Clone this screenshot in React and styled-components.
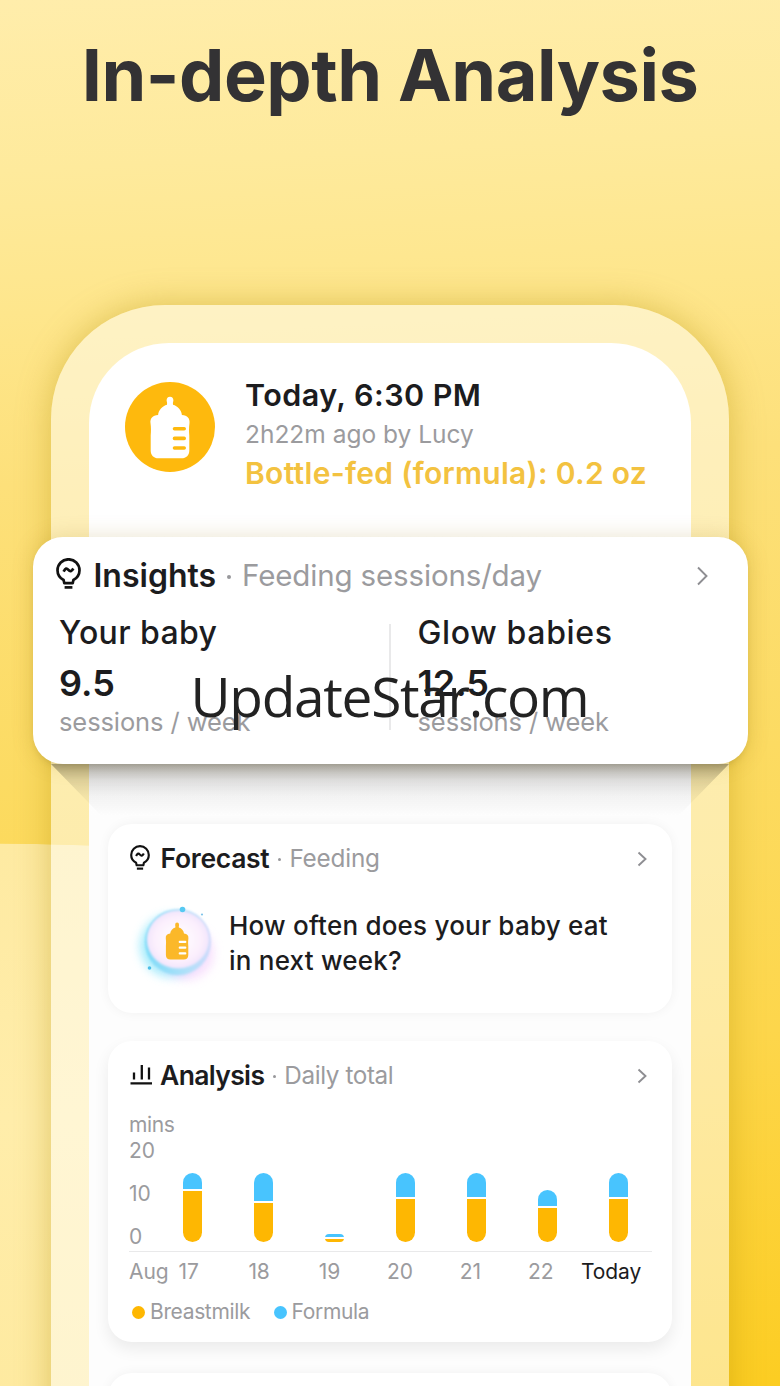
import React from "react";
import styled, { createGlobalStyle } from "styled-components";

const GlobalStyle = createGlobalStyle`
  *, *::before, *::after { box-sizing: border-box; }
  html, body { margin: 0; padding: 0; }
  body { font-family: Inter, "Liberation Sans", sans-serif; color: #1c1c1e; }
`;

const Page = styled.main`
  position: relative;
  width: 780px;
  height: 1386px;
  overflow: hidden;
  background: linear-gradient(177deg, #ffedab 0%, #feea9c 12%, #fee68c 22%, #fde07a 34%, #fcdb62 55%, #fdd64b 75%, #fccd22 100%);
`;

const Backdrop = styled.div`
  position: absolute;
  left: -480px;
  top: 843px;
  width: 800px;
  height: 1100px;
  border-radius: 400px / 26px;
  background: linear-gradient(180deg, #feeaa2 0%, #ffedaa 25%, #feeaa0 50%);
  mask-image: linear-gradient(90deg, #000 72%, transparent 84%);
`;

const Title = styled.h1`
  position: relative;
  margin: 0;
  padding-top: 30px;
  height: 305px;
  font-size: 72px;
  font-weight: 700;
  line-height: 90px;
  letter-spacing: -0.5px;
  text-align: center;
  color: #333234;
`;

const Phone = styled.section`
  position: relative;
  width: 678px;
  height: 1200px;
  margin-left: 51px;
  padding: 38px 38px 0;
  border-radius: 114px 114px 0 0;
  background: rgba(255, 255, 255, 0.49);
  box-shadow: 0 0 34px rgba(176, 140, 0, 0.4);
`;

const Screen = styled.div`
  height: 100%;
  border-radius: 80px 80px 0 0;
  background: linear-gradient(180deg, #fff 0, #fff 190px, #fdfdfd 480px);
`;

const Summary = styled.header`
  display: flex;
  align-items: flex-start;
  height: 194px;
  padding: 32px 0 0 36px;
  gap: 30px;
`;

const Badge = styled.svg`
  flex: none;
  width: 90px;
  height: 90px;
  margin-top: 7px;
`;

const SummaryText = styled.div`
  line-height: 39.5px;
  white-space: nowrap;
`;

const FeedTime = styled.div`
  font-size: 30.5px;
  font-weight: 600;
  letter-spacing: 0.45px;
`;

const FeedMeta = styled.div`
  font-size: 24.5px;
  font-weight: 400;
  color: #9b9b9e;
`;

const FeedAmount = styled.div`
  font-size: 30px;
  font-weight: 600;
  letter-spacing: 0.3px;
  color: #f3c240;
`;

const InsightCard = styled.article`
  position: relative;
  z-index: 1;
  height: 227px;
  margin: 0 -57px 0 -56px;
  padding: 18px 39px 0 26px;
  border-radius: 30px;
  background: #fff;
  box-shadow: 0 0 22px rgba(150, 115, 0, 0.2), 0 4px 8px -4px rgba(0, 0, 0, 0.16);
`;

const CastShadow = styled.div`
  position: absolute;
  z-index: 0;
  left: 0;
  top: 459px;
  width: 678px;
  height: 60px;
  background: linear-gradient(180deg, rgba(0, 0, 0, 0.3) 0, rgba(0, 0, 0, 0.12) 16px, rgba(0, 0, 0, 0.045) 32px, transparent 52px);
  clip-path: polygon(0 0, 678px 0, 640px 39px, 620px 60px, 58px 60px, 38px 39px);
`;

const CardHeader = styled.div`
  display: flex;
  align-items: center;
  height: 40px;
  white-space: nowrap;
`;

const Heading = styled.h2`
  margin: 0 0 0 ${(p) => p.$offset}px;
  font-size: ${(p) => (p.$large ? 32 : 26.5)}px;
  font-weight: 600;
  letter-spacing: ${(p) => p.$tracking || 0}px;
`;

const Subheading = styled.span`
  font-size: ${(p) => (p.$large ? 29.5 : 24.3)}px;
  font-weight: 400;
  letter-spacing: ${(p) => p.$tracking || 0}px;
  color: #9b9b9e;
`;

const Dot = styled.i`
  width: ${(p) => (p.$large ? 4 : 3)}px;
  height: ${(p) => (p.$large ? 4 : 3)}px;
  margin: ${(p) => (p.$large ? "3px 11px 0 11px" : "2px 8px 0 9px")};
  border-radius: 50%;
  background: #98989b;
`;

const Chevron = styled.svg`
  width: ${(p) => (p.$large ? 14 : 12)}px;
  height: ${(p) => (p.$large ? 20 : 16)}px;
  margin-left: auto;
  margin-top: 2px;
  fill: none;
  stroke: #8e8e92;
  stroke-width: 1.9;
`;

const BulbSvg = styled.svg`
  flex: none;
  width: ${(p) => (p.$large ? 25 : 20)}px;
  height: ${(p) => (p.$large ? 31 : 25)}px;
  margin-left: ${(p) => (p.$large ? -3 : 0)}px;
  margin-top: ${(p) => (p.$large ? -3 : -1)}px;
  fill: none;
  stroke: #111;
  stroke-width: 2.7;
  stroke-linejoin: round;
`;

const Compare = styled.div`
  display: grid;
  grid-template-columns: 330px 1.5px 1fr;
  margin-top: 14px;
`;

const Divider = styled.div`
  height: 106px;
  margin-top: 15px;
  background: #e9e9ea;
`;

const Stat = styled.div`
  padding-left: ${(p) => (p.$second ? 27 : 0)}px;
`;

const StatName = styled.div`
  padding-top: 1px;
  font-size: 32px;
  font-weight: 500;
  line-height: 45px;
  letter-spacing: ${(p) => p.$tracking}px;
`;

const StatValue = styled.div`
  font-size: 36px;
  font-weight: 600;
  line-height: 57px;
`;

const StatUnit = styled.div`
  font-size: 25.5px;
  font-weight: 400;
  line-height: 20px;
  letter-spacing: -0.1px;
  color: #9b9b9e;
`;

const Watermark = styled.div`
  position: absolute;
  z-index: 2;
  left: 190.5px;
  top: 656px;
  font-family: "Open Sans", "Noto Sans", sans-serif;
  font-size: 55px;
  line-height: 80px;
  letter-spacing: -1.3px;
  color: #222;
`;

const Card = styled.article`
  height: ${(p) => p.$height}px;
  margin: ${(p) => p.$gap}px 19px 0;
  padding: 14px 24px 0 22px;
  border-radius: 24px;
  background: #fff;
  box-shadow: ${(p) =>
    p.$raised ? "0 7px 16px rgba(0, 0, 0, 0.075)" : "0 0 12px rgba(0, 0, 0, 0.05)"};
`;

const ForecastRow = styled.div`
  display: flex;
  align-items: flex-start;
  gap: 12px;
  margin: 25px 0 0 7px;
`;

const Orb = styled.svg`
  flex: none;
  width: 80px;
  height: 80px;
  overflow: visible;
`;

const Question = styled.p`
  margin: 6px 0 0;
  font-size: 26px;
  font-weight: 500;
  line-height: 34.5px;
  letter-spacing: 0.22px;
  white-space: nowrap;
`;

const BarsIcon = styled.svg`
  flex: none;
  width: 22px;
  height: 22px;
  margin-top: -3px;
  stroke: #111;
  stroke-width: 2.3;
`;

const Chart = styled.div`
  margin: 17px -4px 0 -1px;
  font-size: 21px;
  font-weight: 400;
  color: #9b9b9e;
`;

const Unit = styled.div`
  line-height: 26px;
  letter-spacing: -0.4px;
`;

const Plot = styled.div`
  display: flex;
  height: 114px;
  border-bottom: 1.5px solid #e9e9ea;
`;

const Scale = styled.div`
  display: flex;
  flex-direction: column;
  justify-content: space-between;
  width: 53.5px;
  height: 111px;
  line-height: 25px;
`;

const Bars = styled.div`
  display: flex;
  align-items: flex-end;
  gap: 52px;
  height: 104px;
`;

const Bar = styled.div`
  display: flex;
  flex-direction: column;
  gap: 2px;
  width: 19px;
  border-radius: ${(p) => (p.$short ? "4px" : "9.5px")};
  overflow: hidden;
`;

const Segment = styled.div`
  height: ${(p) => p.$size}px;
  background: ${(p) => (p.$kind === "formula" ? "#48c4fe" : "#feb702")};
`;

const Dates = styled.div`
  display: flex;
  line-height: 39px;
  letter-spacing: -0.1px;
`;

const Month = styled.span`
  width: 24.5px;
`;

const DateLabel = styled.span`
  width: 70.4px;
  text-align: center;
  color: ${(p) => (p.$current ? "#1c1c1e" : "inherit")};
`;

const Legend = styled.div`
  display: flex;
  gap: 23.5px;
  margin: 8px 0 0 3px;
  line-height: 26px;
`;

const LegendItem = styled.span`
  display: flex;
  align-items: center;
  gap: 5px;
  letter-spacing: -0.35px;
  &::before {
    content: "";
    width: 13px;
    height: 13px;
    border-radius: 50%;
    background: ${(p) => p.$color};
  }
`;

const Bulb = ({ $large }) => (
  <BulbSvg $large={$large} viewBox="0 0 25 31">
    <path d="M8.3 25.2 7.6 22Q1.5 18.8 1.5 12.3A11 11 0 0 1 23.5 12.3Q23.5 18.8 17.4 22L16.7 25.2Z" />
    <path d="M7.6 13.6C9.4 10 10.7 9.9 12.4 11.9S15.6 13.6 17.3 10.5" />
    <path d="M8.6 29.4H16.4" />
  </BulbSvg>
);

const Arrow = ({ $large }) => (
  <Chevron $large={$large} viewBox={$large ? "0 0 14 20" : "0 0 12 16"}>
    <path d={$large ? "M3 1.5 11.5 10 3 18.5" : "M2.5 1.5 9.5 8 2.5 14.5"} />
  </Chevron>
);

const Bottle = ({ fill, marks, transform }) => (
  <g transform={transform}>
    <path
      fill={fill}
      d="M41.6 18.5a3.4 3.8 0 0 1 6.800 0Q47.800 20.500 48 22.700C52.500 23.900 56.600 28 56.900 33C62.500 33.500 65 36.500 64.500 41C63.900 45.500 63.900 49 64.300 53.500V68.500C64.300 73.300 61.300 76.300 56.500 76.300H33.500C28.700 76.300 25.700 73.300 25.700 68.500V53.500C26.100 49 26.100 45.500 25.500 41C25 36.500 27.500 33.500 33.100 33C33.400 28 37.500 23.900 42 22.700Q42.200 20.500 41.600 18.500Z"
    />
    <path d="M49.5 46.8H59.2M49.5 56.4H59.2M49.5 66H59.2" stroke={marks} strokeWidth="3.6" strokeLinecap="round" />
  </g>
);

const ForecastOrb = () => (
  <Orb viewBox="0 0 80 80">
    <defs>
      <radialGradient id="orbFill" cx="0.5" cy="0.5" r="0.52">
        <stop offset="0" stopColor="#fff" />
        <stop offset="0.7" stopColor="#fcf0fd" />
        <stop offset="0.93" stopColor="#f3e6fc" />
        <stop offset="1" stopColor="#cfe2fa" />
      </radialGradient>
      <linearGradient id="orbRim" x1="0" y1="0.6" x2="1" y2="0.5">
        <stop offset="0" stopColor="#7edbf8" />
        <stop offset="0.6" stopColor="#b0e1f9" />
        <stop offset="1" stopColor="#cfdafb" />
      </linearGradient>
      <filter id="orbGlow" x="-50%" y="-50%" width="200%" height="200%">
        <feGaussianBlur stdDeviation="5" />
      </filter>
      <filter id="orbSoft" x="-20%" y="-20%" width="140%" height="140%">
        <feGaussianBlur stdDeviation="0.8" />
      </filter>
    </defs>
    <circle cx="34" cy="43" r="31" fill="#8be6fb" opacity="0.75" filter="url(#orbGlow)" />
    <circle cx="50" cy="50" r="27" fill="#f3c4fb" opacity="0.5" filter="url(#orbGlow)" />
    <circle cx="41" cy="39" r="33" fill="url(#orbRim)" filter="url(#orbSoft)" />
    <ellipse cx="41" cy="36.5" rx="31.2" ry="29" fill="url(#orbFill)" filter="url(#orbSoft)" />
    <circle cx="45.5" cy="6.5" r="2.8" fill="#57c9f2" />
    <circle cx="65" cy="11.5" r="1.1" fill="#7fc4ea" />
    <circle cx="12.5" cy="65" r="1.8" fill="#4dbfe8" />
    <Bottle fill="#fbb829" marks="#fff" transform="translate(14 10.8) scale(0.58 0.6)" />
  </Orb>
);

const days = [
  { label: "17", formula: 15.5, milk: 51.5 },
  { label: "18", formula: 28, milk: 39 },
  { label: "19", formula: 3.5, milk: 3 },
  { label: "20", formula: 23.5, milk: 43.5 },
  { label: "21", formula: 23.5, milk: 43.5 },
  { label: "22", formula: 15.5, milk: 34.5 },
  { label: "Today", formula: 23.5, milk: 43.5 },
];

export default function App() {
  return (
    <Page>
      <GlobalStyle />
      <Backdrop />
      <Title>In-depth Analysis</Title>
      <Phone>
        <CastShadow />
        <Screen>
          <Summary>
            <Badge viewBox="0 0 90 90">
              <circle cx="45" cy="45" r="45" fill="#feb90d" />
              <Bottle fill="#fff" marks="#feb90d" />
            </Badge>
            <SummaryText>
              <FeedTime>Today, 6:30 PM</FeedTime>
              <FeedMeta>2h22m ago by Lucy</FeedMeta>
              <FeedAmount>Bottle-fed (formula): 0.2 oz</FeedAmount>
            </SummaryText>
          </Summary>

          <InsightCard>
            <CardHeader>
              <Bulb $large />
              <Heading $large $offset={12.5}>Insights</Heading>
              <Dot $large />
              <Subheading $large $tracking={-0.15}>Feeding sessions/day</Subheading>
              <Arrow $large />
            </CardHeader>
            <Compare>
              <Stat>
                <StatName $tracking={0.4}>Your baby</StatName>
                <StatValue>9.5</StatValue>
                <StatUnit>sessions / week</StatUnit>
              </Stat>
              <Divider />
              <Stat $second>
                <StatName $tracking={0.65}>Glow babies</StatName>
                <StatValue>12.5</StatValue>
                <StatUnit>sessions / week</StatUnit>
              </Stat>
            </Compare>
          </InsightCard>

          <Card $height={189} $gap={60}>
            <CardHeader>
              <Bulb />
              <Heading $offset={10.5} $tracking={-0.3}>Forecast</Heading>
              <Dot />
              <Subheading $tracking={-0.2}>Feeding</Subheading>
              <Arrow />
            </CardHeader>
            <ForecastRow>
              <ForecastOrb />
              <Question>
                How often does your baby eat
                <br />
                in next week?
              </Question>
            </ForecastRow>
          </Card>

          <Card $height={301} $gap={28} $raised>
            <CardHeader>
              <BarsIcon viewBox="0 0 22 22">
                <path d="M4 9.5V16.5M11.8 2V16.5M19 4.5V16.5M.5 20.3H22" />
              </BarsIcon>
              <Heading $offset={8} $tracking={-0.65}>Analysis</Heading>
              <Dot />
              <Subheading $tracking={-0.4}>Daily total</Subheading>
              <Arrow />
            </CardHeader>
            <Chart>
              <Unit>mins</Unit>
              <Plot>
                <Scale>
                  <span>20</span>
                  <span>10</span>
                  <span>0</span>
                </Scale>
                <Bars>
                  {days.map((d) => (
                    <Bar key={d.label} $short={d.formula + d.milk < 10}>
                      <Segment $kind="formula" $size={d.formula} />
                      <Segment $kind="milk" $size={d.milk} />
                    </Bar>
                  ))}
                </Bars>
              </Plot>
              <Dates>
                <Month>Aug</Month>
                {days.map((d) => (
                  <DateLabel key={d.label} $current={d.label === "Today"}>
                    {d.label}
                  </DateLabel>
                ))}
              </Dates>
              <Legend>
                <LegendItem $color="#feb702">Breastmilk</LegendItem>
                <LegendItem $color="#48c4fe">Formula</LegendItem>
              </Legend>
            </Chart>
          </Card>

          <Card $height={200} $gap={31} />
        </Screen>
      </Phone>
      <Watermark>UpdateStar.com</Watermark>
    </Page>
  );
}
